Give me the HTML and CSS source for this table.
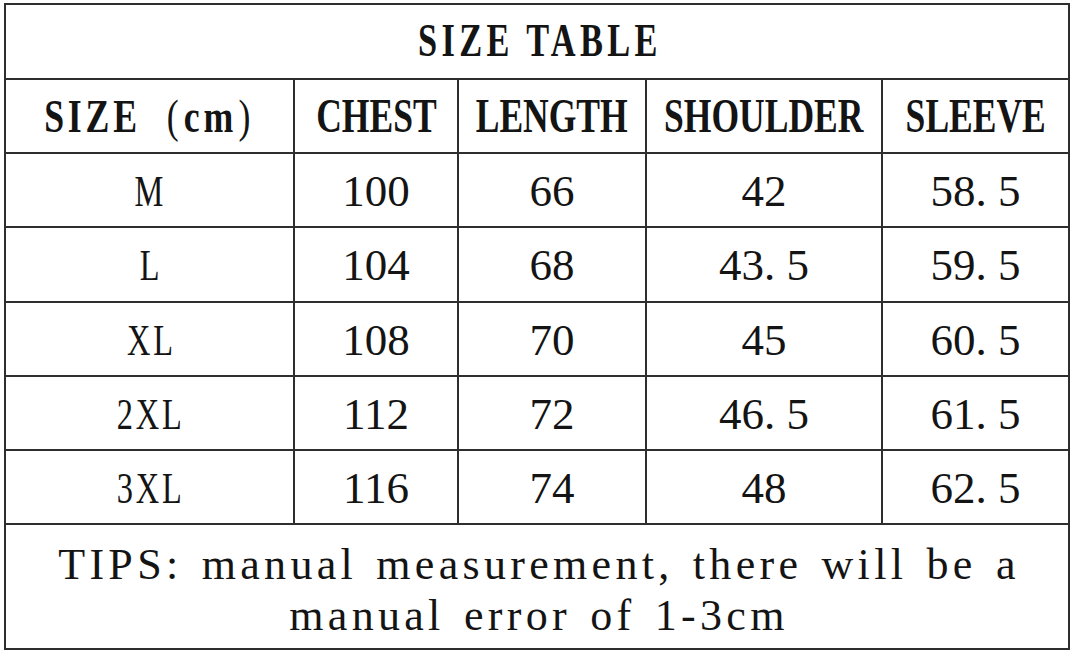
FILE: index.html
```html
<!DOCTYPE html>
<html>
<head>
<meta charset="utf-8">
<link rel="stylesheet" href="styles.css">
</head>
<body>
<div class="sheet">
  <div class="cell title span"><span class="sq wide">SIZE TABLE</span></div>

  <div class="cell head"><span class="sq hsize">SIZE<span class="par">(</span>cm<span class="par close">)</span></span></div>
  <div class="cell head"><span class="sq">CHEST</span></div>
  <div class="cell head"><span class="sq">LENGTH</span></div>
  <div class="cell head"><span class="sq">SHOULDER</span></div>
  <div class="cell head"><span class="sq">SLEEVE</span></div>

  <div class="cell"><span class="lab">M</span></div>
  <div class="cell num">100</div>
  <div class="cell num">66</div>
  <div class="cell num">42</div>
  <div class="cell num">58<span class="dot">.</span>5</div>

  <div class="cell"><span class="lab">L</span></div>
  <div class="cell num">104</div>
  <div class="cell num">68</div>
  <div class="cell num">43<span class="dot">.</span>5</div>
  <div class="cell num">59<span class="dot">.</span>5</div>

  <div class="cell"><span class="lab">XL</span></div>
  <div class="cell num">108</div>
  <div class="cell num">70</div>
  <div class="cell num">45</div>
  <div class="cell num">60<span class="dot">.</span>5</div>

  <div class="cell"><span class="lab">2XL</span></div>
  <div class="cell num">112</div>
  <div class="cell num">72</div>
  <div class="cell num">46<span class="dot">.</span>5</div>
  <div class="cell num">61<span class="dot">.</span>5</div>

  <div class="cell"><span class="lab">3XL</span></div>
  <div class="cell num">116</div>
  <div class="cell num">74</div>
  <div class="cell num">48</div>
  <div class="cell num">62<span class="dot">.</span>5</div>

  <div class="cell tips span"><span class="tiptext">TIPS: manual measurement, there will be a<br>manual error of 1-3cm</span></div>
</div>
</body>
</html>
```

FILE: styles.css
```css
html, body {
  margin: 0;
  padding: 0;
  background: #ffffff;
}

.sheet {
  margin: 3px 0 0 4px;
  width: 1066px;
  box-sizing: border-box;
  display: grid;
  grid-template-columns: 287px 162px 186px 234px 185px;
  grid-template-rows: 73px 72px 72px 73px 72px 72px 72px 123px;
  gap: 2px;
  padding: 2px;
  background: #2e2e2e;
}

.cell {
  background: #ffffff;
  display: flex;
  align-items: center;
  justify-content: center;
  color: #141414;
  overflow: hidden;
}

.span {
  grid-column: 1 / -1;
}

.sq {
  display: inline-block;
  font-family: "Liberation Serif", serif;
  font-weight: bold;
  font-size: 48px;
  line-height: 1;
  transform: scaleX(0.74);
  white-space: nowrap;
}

.wide {
  font-size: 47px;
  letter-spacing: 6px;
  margin-right: -6px;
  transform: scaleX(0.73);
  margin-top: -3px;
}

.hsize {
  font-size: 47px;
  letter-spacing: 5px;
  transform: scaleX(0.76);
  margin-left: 0;
}

.par {
  font-weight: normal;
  margin: 0 2px 0 34px;
}

.par.close {
  margin: 0 0 0 2px;
}

.num {
  font-family: "Liberation Serif", serif;
  font-size: 45px;
  line-height: 1;
  padding-top: 2px;
}

.dot {
  display: inline-block;
  width: 0.5em;
  text-align: left;
}

.lab {
  display: inline-block;
  font-family: "Liberation Serif", serif;
  font-size: 45px;
  line-height: 1;
  letter-spacing: 4px;
  padding-left: 4px;
  transform: scaleX(0.72);
  white-space: nowrap;
  padding-top: 2px;
}

.tips {
  align-items: flex-start;
}

.tiptext {
  display: inline-block;
  font-family: "Liberation Serif", serif;
  font-size: 44px;
  line-height: 51px;
  letter-spacing: 4.3px;
  word-spacing: 4px;
  text-align: center;
  white-space: nowrap;
  margin-top: 14px;
  padding-left: 4px;
}
```
